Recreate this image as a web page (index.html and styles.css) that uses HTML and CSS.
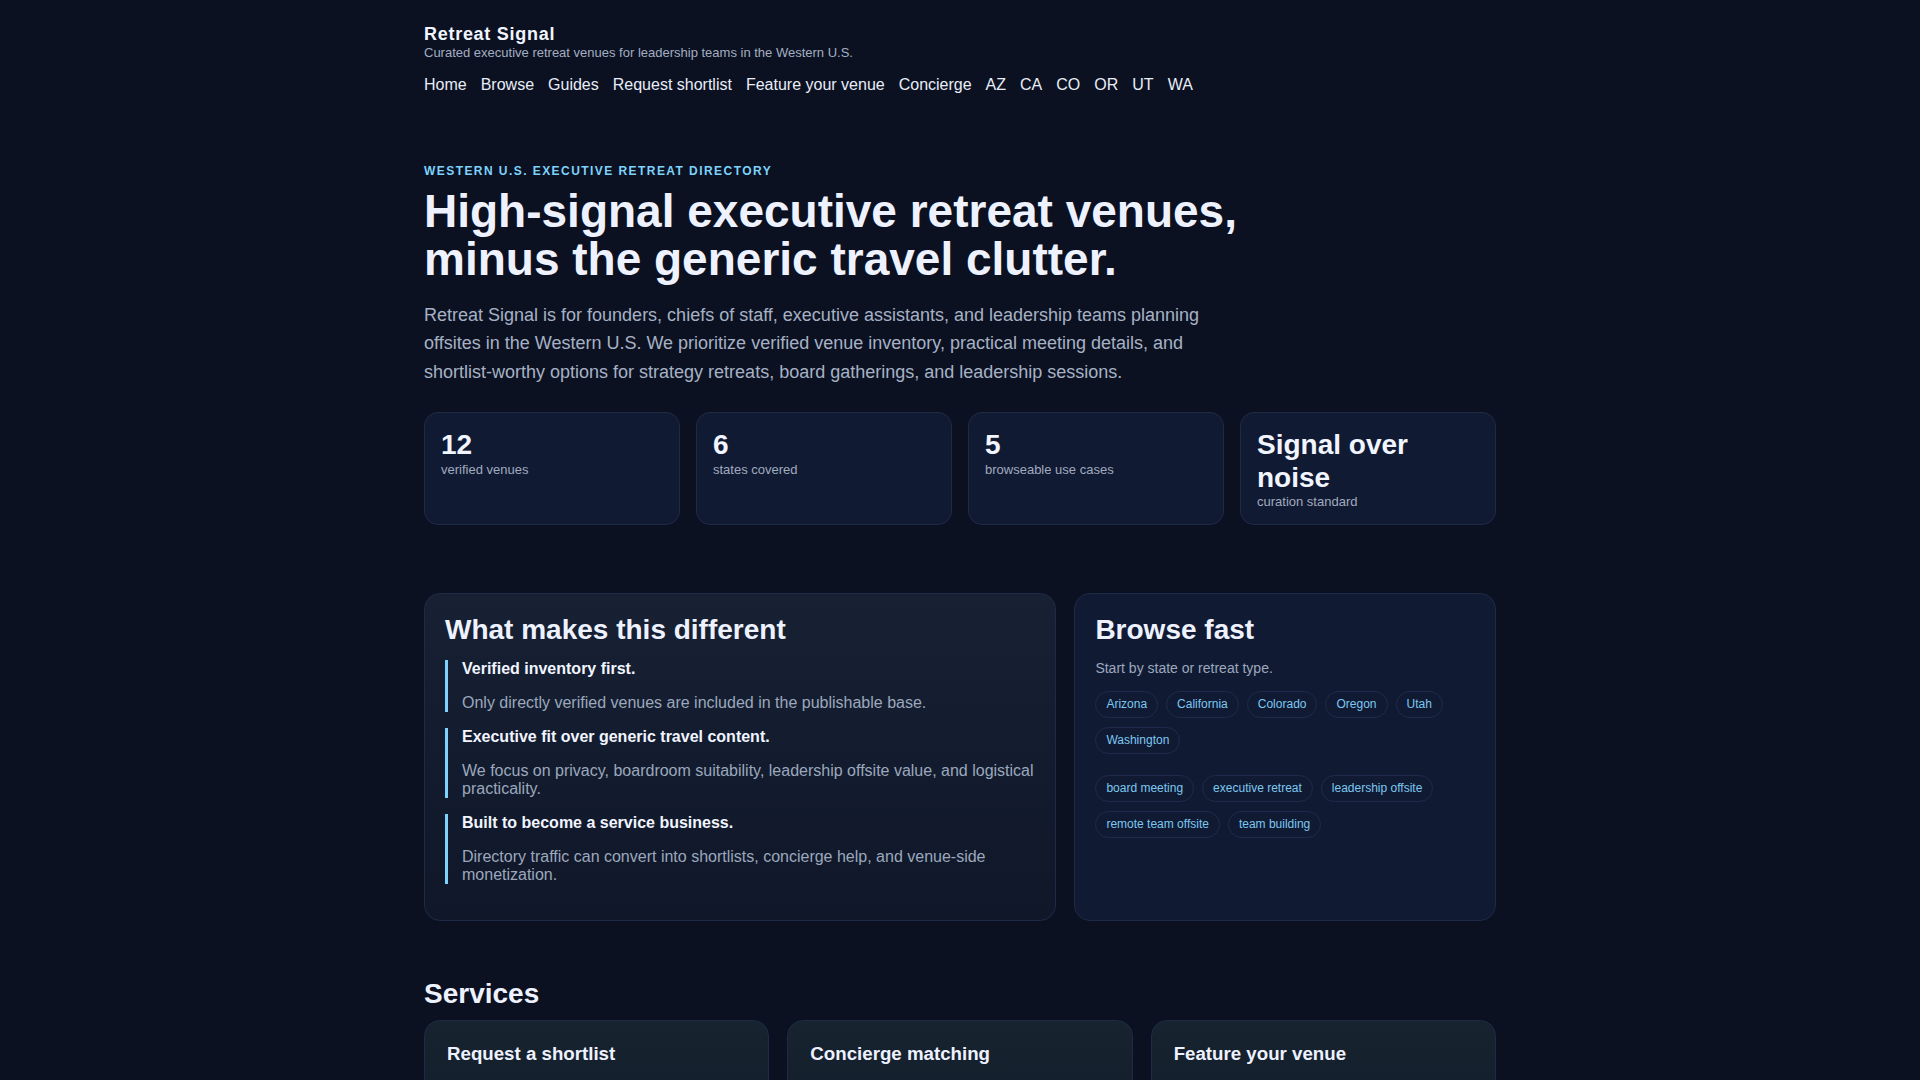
FILE: index.html
```html
<!DOCTYPE html>
<html lang="en">
<head>
<meta charset="utf-8">
<title>Retreat Signal</title>
<link rel="stylesheet" href="styles.css">
</head>
<body>
<div class="wrap">
  <header class="site-header">
    <div class="brand">Retreat Signal</div>
    <div class="tagline">Curated executive retreat venues for leadership teams in the Western U.S.</div>
    <nav class="nav">
      <a href="#">Home</a>
      <a href="#">Browse</a>
      <a href="#">Guides</a>
      <a href="#">Request shortlist</a>
      <a href="#">Feature your venue</a>
      <a href="#">Concierge</a>
      <a href="#">AZ</a>
      <a href="#">CA</a>
      <a href="#">CO</a>
      <a href="#">OR</a>
      <a href="#">UT</a>
      <a href="#">WA</a>
    </nav>
  </header>

  <section class="hero">
    <div class="eyebrow">Western U.S. executive retreat directory</div>
    <h1>High-signal executive retreat venues, minus the generic travel clutter.</h1>
    <p class="lede">Retreat Signal is for founders, chiefs of staff, executive assistants, and leadership teams planning offsites in the Western U.S. We prioritize verified venue inventory, practical meeting details, and shortlist-worthy options for strategy retreats, board gatherings, and leadership sessions.</p>
    <div class="stats">
      <div class="stat"><div class="stat-num">12</div><div class="stat-label">verified venues</div></div>
      <div class="stat"><div class="stat-num">6</div><div class="stat-label">states covered</div></div>
      <div class="stat"><div class="stat-num">5</div><div class="stat-label">browseable use cases</div></div>
      <div class="stat"><div class="stat-num">Signal over noise</div><div class="stat-label">curation standard</div></div>
    </div>
  </section>

  <section class="split">
    <div class="panel panel-diff">
      <h2>What makes this different</h2>
      <div class="points">
        <div class="point">
          <h3>Verified inventory first.</h3>
          <p>Only directly verified venues are included in the publishable base.</p>
        </div>
        <div class="point">
          <h3>Executive fit over generic travel content.</h3>
          <p>We focus on privacy, boardroom suitability, leadership offsite value, and logistical practicality.</p>
        </div>
        <div class="point">
          <h3>Built to become a service business.</h3>
          <p>Directory traffic can convert into shortlists, concierge help, and venue-side monetization.</p>
        </div>
      </div>
    </div>
    <div class="panel panel-browse">
      <h2>Browse fast</h2>
      <p class="muted">Start by state or retreat type.</p>
      <div class="chips">
        <a class="chip" href="#">Arizona</a>
        <a class="chip" href="#">California</a>
        <a class="chip" href="#">Colorado</a>
        <a class="chip" href="#">Oregon</a>
        <a class="chip" href="#">Utah</a>
        <a class="chip" href="#">Washington</a>
      </div>
      <div class="chips chips-second">
        <a class="chip" href="#">board meeting</a>
        <a class="chip" href="#">executive retreat</a>
        <a class="chip" href="#">leadership offsite</a>
        <a class="chip" href="#">remote team offsite</a>
        <a class="chip" href="#">team building</a>
      </div>
    </div>
  </section>

  <section class="services">
    <h2>Services</h2>
    <div class="service-grid">
      <div class="service">
        <h3>Request a shortlist</h3>
        <p>Tell us your dates, headcount, and goals. We send back a short list of verified venues that fit.</p>
      </div>
      <div class="service">
        <h3>Concierge matching</h3>
        <p>Hands-on help comparing venues, meeting spaces, and logistics for executive offsites.</p>
      </div>
      <div class="service">
        <h3>Feature your venue</h3>
        <p>Venues that meet the standard can apply for a verified listing in the directory.</p>
      </div>
    </div>
  </section>
</div>
</body>
</html>
```

FILE: styles.css
```css
html, body {
  margin: 0;
  padding: 0;
}

body {
  background: #0b1121;
  color: #eef2ff;
  font-family: "Liberation Sans", Arial, sans-serif;
}

a {
  color: inherit;
  text-decoration: none;
}

.wrap {
  max-width: 1120px;
  margin: 0 auto;
  padding: 0 24px 80px;
  box-sizing: border-box;
}

/* Header */
.site-header {
  padding-top: 23px;
}

.brand {
  font-size: 18px;
  font-weight: 700;
  line-height: 22px;
  letter-spacing: 0.04em;
  color: #f1f5ff;
}

.tagline {
  font-size: 13px;
  line-height: 15px;
  color: #a3aec2;
}

.nav {
  display: flex;
  flex-wrap: wrap;
  gap: 14px;
  margin-top: 16px;
  font-size: 16px;
  line-height: 18px;
  color: #e8edf8;
}

/* Hero */
.hero {
  margin-top: 70px;
}

.eyebrow {
  font-size: 12px;
  line-height: 14px;
  font-weight: 700;
  letter-spacing: 0.12em;
  text-transform: uppercase;
  color: #7dd3fc;
}

.hero h1 {
  margin: 9px 0 0;
  font-size: 46px;
  line-height: 1.05;
  font-weight: 700;
  color: #eef2ff;
  max-width: 900px;
}

.lede {
  margin: 17px 0 0;
  max-width: 800px;
  font-size: 18px;
  line-height: 28.6px;
  color: #a7b1c5;
}

.stats {
  display: grid;
  grid-template-columns: repeat(4, 1fr);
  gap: 16px;
  margin-top: 26px;
}

.stat {
  padding: 16px 16px 15px;
  border: 1px solid #1f2a48;
  border-radius: 14px;
  background: #111a33;
}

.stat-num {
  font-size: 28px;
  line-height: 1.15;
  font-weight: 700;
  color: #f1f5ff;
}

.stat-label {
  font-size: 13px;
  color: #a0abbf;
}

/* Split panels */
.split {
  display: grid;
  grid-template-columns: 1.5fr 1fr;
  gap: 18px;
  margin-top: 68px;
}

.panel {
  border: 1px solid #1f2a48;
  border-radius: 16px;
  padding: 20px;
}

.panel h2,
.services h2 {
  margin: 0 0 14px;
  font-size: 28px;
  line-height: 1.15;
  font-weight: 700;
  color: #eef2ff;
}

.panel-diff {
  padding: 20px 18px 36px 20px;
  background: linear-gradient(180deg, #172133 0%, #0f1729 100%);
}

.panel-browse {
  background: #111a33;
}

.points {
  display: flex;
  flex-direction: column;
  gap: 16px;
}

.point {
  border-left: 3px solid #7dd3fc;
  padding-left: 14px;
}

.point h3 {
  margin: 0;
  font-size: 16px;
  line-height: 18px;
  font-weight: 700;
  color: #f1f5ff;
}

.point p {
  margin: 16px 0 0;
  font-size: 16px;
  line-height: 18px;
  color: #9ca8bd;
}

.muted {
  margin: 0 0 15px;
  font-size: 14px;
  line-height: 16px;
  color: #9ca8bd;
}

.chips {
  display: flex;
  flex-wrap: wrap;
  column-gap: 8px;
  row-gap: 9px;
}

.chips-second {
  margin-top: 21px;
}

.chip {
  display: inline-block;
  padding: 5px 10px;
  font-size: 12px;
  line-height: 15px;
  border: 1px solid #1f2b4a;
  border-radius: 999px;
  color: #7cc8f0;
}

/* Services */
.services {
  margin-top: 57px;
}

.services h2 {
  margin-bottom: 10px;
}

.service-grid {
  display: grid;
  grid-template-columns: repeat(3, 1fr);
  gap: 18px;
}

.service {
  padding: 22px;
  border: 1px solid #1f2a48;
  border-radius: 16px;
  background: linear-gradient(180deg, #17232f 0%, #121b2b 100%);
}

.service h3 {
  margin: 0;
  font-size: 18.7px;
  line-height: 1.2;
  font-weight: 700;
  color: #eef2ff;
}

.service p {
  margin: 12px 0 0;
  font-size: 15px;
  line-height: 1.5;
  color: #9ca8bd;
}
```
